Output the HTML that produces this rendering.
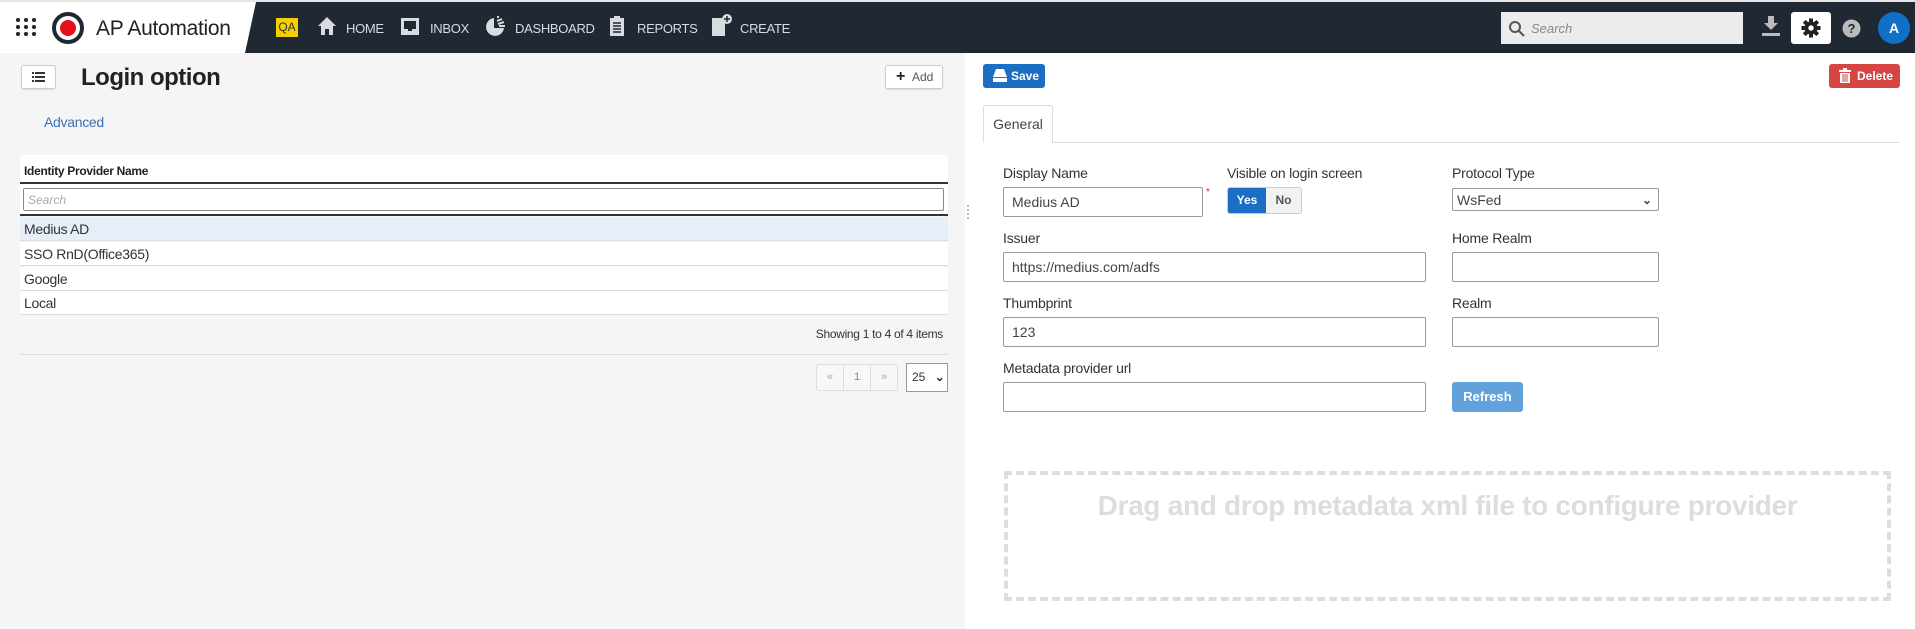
<!DOCTYPE html>
<html><head><meta charset="utf-8"><style>
*{box-sizing:border-box;margin:0;padding:0}
body{width:1915px;height:629px;overflow:hidden;font-family:"Liberation Sans",sans-serif;background:#fff;position:relative;color:#333}
.a{position:absolute}
.nav{left:0;top:2px;width:1915px;height:51px;background:#1f2833}
.topline{left:0;top:0;width:1915px;height:2px;background:#e6e6e6}
.logo{left:0;top:2px;width:256px;height:51px;background:#fff;clip-path:polygon(0 0,100% 0,245px 100%,0 100%)}
.ni{color:#d8dbe0;font-size:13px;top:21px;letter-spacing:-0.3px}
.left{left:0;top:53px;width:965px;height:576px;background:#f5f5f5}
.btn{background:#fff;border:1px solid #ccc;border-radius:3px;box-shadow:0 1px 1px rgba(0,0,0,.1)}
.lbl{font-size:14px;color:#333;letter-spacing:-0.2px}
.inp{border:1px solid #999;border-radius:2px;background:#fff;font-size:14px;padding-left:8px;display:flex;align-items:center;color:#444}
.row{left:20px;width:928px;height:24px;font-size:14px;padding-left:4px;line-height:24px;border-bottom:1px solid #ddd;background:#fff;letter-spacing:-0.3px}
</style></head><body>
<div class="a topline"></div>
<div class="a nav"></div>
<div class="a logo"></div>
<svg class="a" style="left:15px;top:17px" width="22" height="20"><g fill="#222"><circle cx="3" cy="3" r="2"/><circle cx="11" cy="3" r="2"/><circle cx="19" cy="3" r="2"/><circle cx="3" cy="10" r="2"/><circle cx="11" cy="10" r="2"/><circle cx="19" cy="10" r="2"/><circle cx="3" cy="17" r="2"/><circle cx="11" cy="17" r="2"/><circle cx="19" cy="17" r="2"/></g></svg>
<svg class="a" style="left:52px;top:12px" width="32" height="32"><circle cx="16" cy="16" r="14" fill="#fff" stroke="#1f2833" stroke-width="4"/><circle cx="16" cy="16" r="8" fill="#e3101c"/></svg>
<div class="a" style="left:96px;top:17px;font-size:21px;color:#222;letter-spacing:-0.3px">AP Automation</div>
<div class="a" style="left:276px;top:18px;width:22px;height:19px;background:#f5d000;font-size:12px;color:#333;text-align:center;line-height:19px">QA</div>
<svg class="a" style="left:317px;top:16px" width="20" height="20"><path d="M10 1L1 10h3v9h4v-6h4v6h4v-9h3z" fill="#d8dbe0"/></svg>
<div class="a ni" style="left:346px">HOME</div>
<svg class="a" style="left:400px;top:17px" width="20" height="19"><path d="M1 1h18v17H1zM4 4v8h4v2h4v-2h4V4z" fill="#d8dbe0" fill-rule="evenodd"/></svg>
<div class="a ni" style="left:430px">INBOX</div>
<svg class="a" style="left:485px;top:16px" width="21" height="21"><path d="M9 2A9 9 0 1 0 19 12H9z" fill="#d8dbe0"/><path d="M12 1l2 0M12 5l5 -2M13 8l6-2M14 10l6 0" stroke="#d8dbe0" stroke-width="2"/></svg>
<div class="a ni" style="left:515px">DASHBOARD</div>
<svg class="a" style="left:609px;top:15px" width="16" height="22"><path d="M1 3h4V1h6v2h4v18H1z" fill="#d8dbe0"/><path d="M4 8h8M4 11h8M4 14h8M4 17h8" stroke="#1f2833" stroke-width="1.5"/></svg>
<div class="a ni" style="left:637px">REPORTS</div>
<svg class="a" style="left:711px;top:13px" width="22" height="24"><path d="M1 5h9v18H1z" fill="#d8dbe0"/><path d="M10 5h4v18h-4z" fill="#d8dbe0"/><circle cx="16" cy="6" r="5" fill="#d8dbe0"/><path d="M16 3v6M13 6h6" stroke="#1f2833" stroke-width="1.5"/></svg>
<div class="a ni" style="left:740px">CREATE</div>
<div class="a" style="left:1501px;top:12px;width:242px;height:32px;background:#ececec"></div>
<svg class="a" style="left:1508px;top:20px" width="17" height="17"><circle cx="7" cy="7" r="5" fill="none" stroke="#555" stroke-width="2"/><path d="M11 11l5 5" stroke="#555" stroke-width="2"/></svg>
<div class="a" style="left:1531px;top:21px;font-size:13px;font-style:italic;color:#888">Search</div>
<svg class="a" style="left:1761px;top:15px" width="20" height="22"><path d="M7 1h6v7h4l-7 7-7-7h4z" fill="#bbb"/><rect x="1" y="18" width="18" height="3" fill="#bbb"/></svg>
<div class="a" style="left:1791px;top:12px;width:40px;height:32px;background:#fff;border-radius:3px"></div>
<svg class="a" style="left:1801px;top:18px" width="20" height="20" viewBox="0 0 20 20"><g fill="#222"><circle cx="10" cy="10" r="6.5"/><rect x="8" y="0.5" width="4" height="19"/><rect x="0.5" y="8" width="19" height="4"/><rect x="8" y="0.5" width="4" height="19" transform="rotate(45 10 10)"/><rect x="8" y="0.5" width="4" height="19" transform="rotate(-45 10 10)"/></g><circle cx="10" cy="10" r="2.7" fill="#fff"/></svg>
<svg class="a" style="left:1842px;top:19px" width="19" height="19"><circle cx="9.5" cy="9.5" r="9" fill="#bbb"/><text x="9.5" y="14" font-size="13" font-weight="bold" text-anchor="middle" fill="#1f2833" font-family="Liberation Sans">?</text></svg>
<div class="a" style="left:1878px;top:12px;width:32px;height:32px;border-radius:50%;background:#1070c8;color:#fff;font-size:14px;font-weight:bold;text-align:center;line-height:32px">A</div>

<div class="a left"></div>
<div class="a" style="left:967px;top:205px;width:2px;height:14px;border-left:2px dotted #bbb"></div>
<div class="a btn" style="left:21px;top:65px;width:35px;height:24px"></div>
<svg class="a" style="left:32px;top:71px" width="13" height="12"><g fill="#333"><rect x="0" y="1" width="2" height="2"/><rect x="3" y="1" width="10" height="2"/><rect x="0" y="5" width="2" height="2"/><rect x="3" y="5" width="10" height="2"/><rect x="0" y="9" width="2" height="2"/><rect x="3" y="9" width="10" height="2"/></g></svg>
<div class="a" style="left:81px;top:64px;font-size:24px;font-weight:bold;color:#222;letter-spacing:-0.5px">Login option</div>
<div class="a btn" style="left:885px;top:65px;width:58px;height:24px;font-size:12px;color:#555;padding-left:26px;line-height:22px">Add</div>
<div class="a" style="left:896px;top:70px;font-size:16px;font-weight:bold;color:#222;line-height:14px">+</div>
<div class="a" style="left:44px;top:114px;font-size:14px;color:#3a6fb5;letter-spacing:-0.3px">Advanced</div>
<div class="a" style="left:20px;top:155px;width:928px;height:29px;background:#fff;border-bottom:2px solid #333"></div>
<div class="a" style="left:24px;top:164px;font-size:12px;font-weight:bold;color:#222;letter-spacing:-0.3px">Identity Provider Name</div>
<div class="a" style="left:20px;top:184px;width:928px;height:32px;background:#fff;border-bottom:2px solid #333"></div>
<div class="a inp" style="left:23px;top:188px;width:921px;height:23px;padding-left:4px;font-size:12px;font-style:italic;color:#aaa;border-color:#888">Search</div>
<div class="a row" style="top:217px;background:#e6eef7">Medius AD</div>
<div class="a row" style="top:242px">SSO RnD(Office365)</div>
<div class="a row" style="top:267px">Google</div>
<div class="a row" style="top:291px">Local</div>
<div class="a" style="left:700px;top:327px;width:243px;text-align:right;font-size:12px;color:#333;letter-spacing:-0.3px">Showing 1 to 4 of 4 items</div>
<div class="a" style="left:20px;top:354px;width:928px;height:1px;background:#ddd"></div>
<div class="a" style="left:816px;top:364px;width:82px;height:27px;border:1px solid #ddd;border-radius:3px;display:flex;font-size:11px;color:#aaa;background:#f7f7f7">
<div style="width:27px;text-align:center;line-height:25px;border-right:1px solid #ddd">«</div><div style="width:27px;text-align:center;line-height:25px;border-right:1px solid #ddd;color:#888">1</div><div style="width:26px;text-align:center;line-height:25px">»</div></div>
<div class="a" style="left:906px;top:363px;width:42px;height:29px;border:1px solid #999;background:#fff;font-size:12px;line-height:27px;padding-left:5px">25 <span style="font-weight:bold;margin-left:6px">⌄</span></div>

<div class="a" style="left:983px;top:64px;width:62px;height:24px;background:#1a6fc4;border-radius:3px;color:#fff;font-size:12px;font-weight:bold;line-height:24px;padding-left:28px">Save</div>
<svg class="a" style="left:993px;top:69px" width="14" height="13"><path d="M3 0h8l3 8H0z" fill="#fff"/><rect x="0" y="9" width="14" height="4" fill="#fff"/></svg>
<div class="a" style="left:1829px;top:64px;width:71px;height:24px;background:#d64541;border-radius:3px;color:#fff;font-size:12px;font-weight:bold;line-height:24px;padding-left:28px">Delete</div>
<svg class="a" style="left:1839px;top:68px" width="12" height="15"><rect x="0" y="2" width="12" height="2" fill="#fff"/><rect x="4" y="0" width="4" height="2" fill="#fff"/><path d="M1 5h10v10H1z" fill="#fff"/><path d="M4 6v8M6 6v8M8 6v8" stroke="#d64541"/></svg>
<div class="a" style="left:983px;top:142px;width:917px;height:1px;background:#ddd"></div>
<div class="a" style="left:983px;top:105px;width:70px;height:38px;border:1px solid #ddd;border-bottom:1px solid #fff;border-radius:3px 3px 0 0;background:#fff;font-size:14px;text-align:center;line-height:36px;color:#444">General</div>

<div class="a lbl" style="left:1003px;top:165px">Display Name</div>
<div class="a inp" style="left:1003px;top:187px;width:200px;height:30px">Medius AD</div>
<div class="a" style="left:1206px;top:187px;color:#d22;font-size:10px">*</div>
<div class="a lbl" style="left:1227px;top:165px">Visible on login screen</div>
<div class="a" style="left:1227px;top:187px;width:75px;height:27px;border:1px solid #ccc;border-radius:3px;background:#f2f2f2;font-size:12px;font-weight:bold;display:flex;overflow:hidden">
<div style="width:38px;background:#1a6fc4;color:#fff;text-align:center;line-height:25px">Yes</div><div style="flex:1;text-align:center;line-height:25px;color:#555">No</div></div>
<div class="a lbl" style="left:1452px;top:165px">Protocol Type</div>
<div class="a inp" style="left:1452px;top:188px;width:207px;height:23px;padding-left:4px;justify-content:space-between;padding-right:6px">WsFed<span style="font-size:12px;font-weight:bold">⌄</span></div>

<div class="a lbl" style="left:1003px;top:230px">Issuer</div>
<div class="a inp" style="left:1003px;top:252px;width:423px;height:30px">https://medius.com/adfs</div>
<div class="a lbl" style="left:1452px;top:230px">Home Realm</div>
<div class="a inp" style="left:1452px;top:252px;width:207px;height:30px"></div>

<div class="a lbl" style="left:1003px;top:295px">Thumbprint</div>
<div class="a inp" style="left:1003px;top:317px;width:423px;height:30px">123</div>
<div class="a lbl" style="left:1452px;top:295px">Realm</div>
<div class="a inp" style="left:1452px;top:317px;width:207px;height:30px"></div>

<div class="a lbl" style="left:1003px;top:360px">Metadata provider url</div>
<div class="a inp" style="left:1003px;top:382px;width:423px;height:30px"></div>
<div class="a" style="left:1452px;top:382px;width:71px;height:30px;background:#62a2dc;border-radius:3px;color:#fff;font-size:13px;font-weight:bold;text-align:center;line-height:30px">Refresh</div>

<div class="a" style="left:1004px;top:471px;width:887px;height:130px;border:4px dashed #ddd"></div>
<div class="a" style="left:1004px;top:490px;width:887px;text-align:center;font-size:28px;font-weight:bold;color:#ddd;letter-spacing:-0.3px">Drag and drop metadata xml file to configure provider</div>
</body></html>
